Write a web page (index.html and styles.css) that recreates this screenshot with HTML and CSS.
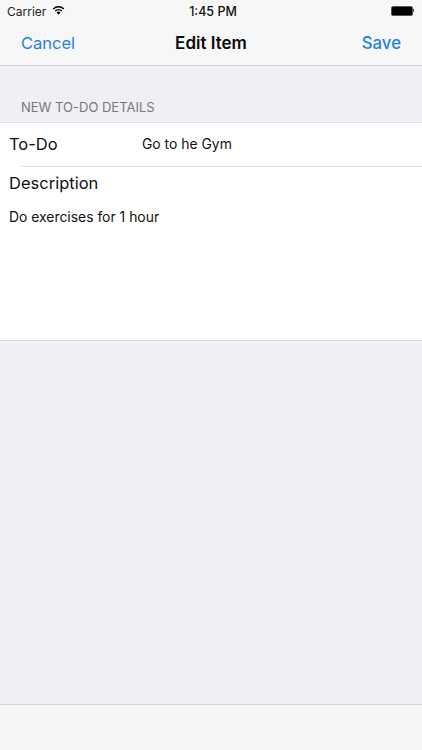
FILE: index.html
```html
<!DOCTYPE html>
<html lang="en">
<head>
<meta charset="utf-8">
<title>Edit Item</title>
<link rel="stylesheet" href="styles.css">
</head>
<body>
<div class="screen">
  <header class="topbar">
    <div class="status">
      <div class="status-left">
        <span>Carrier</span>
        <svg class="wifi" viewBox="0 0 14 10" width="13" height="10"><path d="M7 10 4.9 7.6a3 3 0 0 1 4.2 0z" fill="#000"/><path d="M3.4 6.2a5.2 5.2 0 0 1 7.2 0M1.3 3.8a8.2 8.2 0 0 1 11.4 0" fill="none" stroke="#000" stroke-width="1.5"/></svg>
      </div>
      <div class="status-time">1:45 PM</div>
      <div class="status-right">
        <div class="battery"></div>
        <div class="battery-tip"></div>
      </div>
    </div>
    <nav class="nav">
      <span class="nav-btn">Cancel</span>
      <span class="nav-title">Edit Item</span>
      <span class="nav-btn nav-end">Save</span>
    </nav>
  </header>
  <main class="content">
    <div class="section-title">NEW TO-DO DETAILS</div>
    <section class="card">
      <div class="row">
        <span class="label todo-label">To-Do</span>
        <span class="value">Go to he Gym</span>
      </div>
      <div class="desc">
        <div class="label">Description</div>
        <div class="value desc-text">Do exercises for 1 hour</div>
      </div>
    </section>
  </main>
  <footer class="toolbar"></footer>
</div>
</body>
</html>
```
FILE: styles.css
```css
* { box-sizing: border-box; }
html, body { margin: 0; padding: 0; }
body { font-family: "Inter", "Liberation Sans", sans-serif; color: #000; }
.screen { width: 422px; height: 750px; display: flex; flex-direction: column; background: #efeff4; overflow: hidden; }
.topbar { height: 66px; flex: none; background: #f7f7f8; border-bottom: 1px solid #d2d2d6; }
.status { height: 22px; display: flex; align-items: center; justify-content: space-between; padding: 0 7px 0 7px; position: relative; }
.status-left { display: flex; align-items: center; gap: 6px; font-size: 12px; color: #222; }
.wifi { margin-top: -3px; }
.status-time { position: absolute; left: 4px; right: 0; text-align: center; font-size: 12.5px; font-weight: 500; color: #111; }
.status-right { display: flex; align-items: center; margin-left: auto; }
.battery { width: 22px; height: 10px; border: 1px solid #555; border-radius: 2px; background: #000; margin-top: -1px; }
.battery-tip { width: 1.5px; height: 3px; background: #555; margin-top: -1px; margin-right: 1px; }
.nav { height: 43px; display: grid; grid-template-columns: 1fr auto 1fr; align-items: center; padding: 0 21px 2px; }
.nav-btn { font-size: 16.5px; color: #1f7fe5; }
.nav-end { text-align: right; font-weight: 500; font-size: 16.8px; }
.nav-title { font-size: 17px; font-weight: 600; color: #0b0b0b; }
.content { flex: 1; }
.section-title { height: 56px; padding: 34px 0 0 21px; font-size: 13px; line-height: 15px; color: #77777c; }
.card { height: 219px; background: #fff; border-top: 1px solid #e2e2e6; border-bottom: 1px solid #dcdce0; padding-left: 9px; }
.row { height: 44px; display: flex; align-items: center; margin-left: 12px; padding-bottom: 2px; border-bottom: 1px solid #e3e3e6; }
.label { font-size: 16.5px; line-height: 22px; color: #111; }
.todo-label { margin-left: -12px; width: 133px; flex: none; }
.value { font-size: 13.9px; color: #111; }
.desc { padding-top: 5px; }
.desc-text { margin-top: 13px; line-height: 20px; }
.toolbar { height: 46px; flex: none; background: #f6f6f7; border-top: 1px solid #d6d6da; }
```
